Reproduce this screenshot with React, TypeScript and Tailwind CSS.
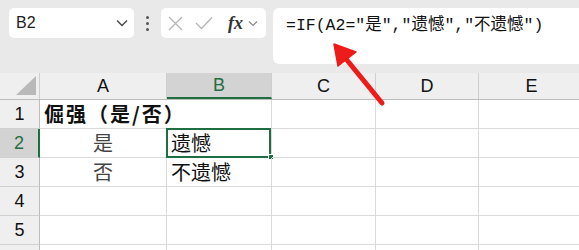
import React from "react";

const cols = [
  { key: "A", w: "w-[127px]" },
  { key: "B", w: "w-[105px]" },
  { key: "C", w: "w-[104px]" },
  { key: "D", w: "w-[103px]" },
  { key: "E", w: "w-[106px]" },
];

const cjk = { fontFamily: '"Noto Sans CJK SC", "Noto Sans", sans-serif' };
const arial = { fontFamily: '"Liberation Sans", Arial, sans-serif' };

function Chevron() {
  return (
    <svg width="12" height="8" viewBox="0 0 12 8" className="shrink-0">
      <path d="M1 1.5 L6 6.5 L11 1.5" fill="none" stroke="#444" strokeWidth="1.3" />
    </svg>
  );
}

function TopBar() {
  return (
    <div className="flex h-[73px] items-start gap-0 bg-[#e9e9e9] pl-[9px] pt-2">
      {/* name box */}
      <div className="flex h-[30px] w-[125px] items-center justify-between rounded-[5px] bg-white pl-[7px] pr-[6px]">
        <span className="text-[16px] text-[#222]" style={arial}>
          B2
        </span>
        <Chevron />
      </div>
      <div className="flex h-[30px] w-[27px] flex-col items-center justify-center gap-[3px]">
        <span className="h-[3px] w-[3px] rounded-full bg-[#555]"></span>
        <span className="h-[3px] w-[3px] rounded-full bg-[#555]"></span>
        <span className="h-[3px] w-[3px] rounded-full bg-[#555]"></span>
      </div>
      {/* fx box */}
      <div className="flex h-[30px] w-[105px] items-center rounded-[5px] bg-white pl-[7px]">
        <svg width="15" height="15" viewBox="0 0 15 15">
          <path d="M1 1 L14 14 M14 1 L1 14" stroke="#b5b5b5" strokeWidth="1.3" />
        </svg>
        <svg width="18" height="14" viewBox="0 0 18 14" className="ml-[12px]">
          <path d="M1 7 L6.5 12.5 L17 1.5" fill="none" stroke="#b5b5b5" strokeWidth="1.3" />
        </svg>
        <span
          className="ml-[15px] text-[18px] font-bold italic leading-none text-[#333]"
          style={{ fontFamily: '"Liberation Serif", "Times New Roman", serif' }}
        >
          fx
        </span>
        <span className="ml-[5px] flex">
          <svg width="10" height="7" viewBox="0 0 10 7">
            <path d="M1 1.5 L5 5.5 L9 1.5" fill="none" stroke="#888" strokeWidth="1.2" />
          </svg>
        </span>
      </div>
      {/* formula box */}
      <div className="-mr-4 ml-[7px] h-[56px] flex-1 rounded-[6px] bg-white pl-[13px] pt-[4px]">
        <span
          className="whitespace-nowrap text-[16.5px] text-[#111]"
          style={{ fontFamily: '"Liberation Mono", "DejaVu Sans Mono", "Noto Sans CJK SC", monospace' }}
        >
          =IF(A2="是","遗憾","不遗憾")
        </span>
      </div>
    </div>
  );
}

function HeaderRow() {
  return (
    <div className="flex h-[27px] border-b border-[#bdbdbd] bg-[#efefef]">
      <div className="flex w-[40px] shrink-0 items-end justify-end border-r border-[#cfcfcf] pb-[4px] pr-[3px]">
        <svg width="20" height="19" viewBox="0 0 20 19">
          <path d="M20 0 L20 19 L0 19 Z" fill="#b9b9b9" />
        </svg>
      </div>
      {cols.map((c) => {
        const sel = c.key === "B";
        return (
          <div
            key={c.key}
            className={`${c.w} flex shrink-0 items-center justify-center border-r border-[#cfcfcf] text-[18px] ${
              sel ? "border-b-2 border-b-[#1e6e42] bg-[#d3d3d3] text-[#1e6e42]" : "text-[#111]"
            }`}
            style={arial}
          >
            {c.key}
          </div>
        );
      })}
    </div>
  );
}

type Cell = { text?: string; align?: "center" | "left"; bold?: boolean; light?: boolean; overflow?: boolean };

const rows: { n: number; label: string; cells: Cell[] }[] = [
  { n: 1, label: "1", cells: [{ text: "倔强（是/否）", bold: true, overflow: true }, {}, {}, {}, {}] },
  { n: 2, label: "2", cells: [{ text: "是", align: "center", light: true }, { text: "遗憾" }, {}, {}, {}] },
  { n: 3, label: "3", cells: [{ text: "否", align: "center", light: true }, { text: "不遗憾" }, {}, {}, {}] },
  { n: 4, label: "4", cells: [{}, {}, {}, {}, {}] },
  { n: 5, label: "5", cells: [{}, {}, {}, {}, {}] },
  { n: 6, label: "", cells: [{}, {}, {}, {}, {}] },
];

function GridRow({ n, label, cells }: { n: number; label: string; cells: Cell[] }) {
  const selRow = n === 2;
  return (
    <div className="flex h-[29px]">
      <div
        className={`flex w-[40px] shrink-0 items-center justify-center border-b border-[#d0d0d0] text-[18px] ${
          selRow ? "border-r-2 border-r-[#1e6e42] bg-[#d3d3d3] text-[#1e6e42]" : "border-r border-r-[#bdbdbd] bg-[#efefef] text-[#111]"
        }`}
        style={arial}
      >
        {label}
      </div>
      {cells.map((cell, i) => {
        const selected = n === 2 && i === 1;
        return (
          <div
            key={i}
            className={`${cols[i].w} relative flex shrink-0 items-center border-b border-[#dadada] ${
              cell.overflow ? "" : "border-r border-r-[#dadada]"
            } ${cell.align === "center" ? "justify-center" : "justify-start pl-[4px]"}`}
          >
            {cell.text && (
              <span
                className={`whitespace-nowrap text-[20px] leading-none ${cell.bold ? "font-bold tracking-[2px] text-[#111]" : ""} ${
                  cell.light ? "text-[#444]" : "text-[#111]"
                } ${cell.overflow ? "relative z-10" : ""}`}
                style={cjk}
              >
                {cell.text}
              </span>
            )}
            {selected && (
              <>
                <div className="absolute -left-[1px] -top-[1px] bottom-[-1px] right-0 border-2 border-[#1e6e42]"></div>
                <div className="absolute -bottom-[3px] -right-[3px] h-[6px] w-[6px] border border-white bg-[#1e6e42]"></div>
              </>
            )}
          </div>
        );
      })}
    </div>
  );
}

export default function App() {
  return (
    <div className="relative h-[250px] w-[579px] overflow-hidden bg-white">
      <TopBar />
      <HeaderRow />
      {rows.map((r) => (
        <GridRow key={r.n} n={r.n} label={r.label} cells={r.cells} />
      ))}
      <svg className="pointer-events-none absolute left-0 top-0 z-20" width="579" height="250">
        <line x1="382" y1="103" x2="342" y2="54" stroke="#ee1b1b" strokeWidth="5" strokeLinecap="round" />
        <path d="M334 44 L338 66 L356 52 Z" fill="#ee1b1b" stroke="#ee1b1b" strokeWidth="1.5" strokeLinejoin="round" />
      </svg>
    </div>
  );
}
